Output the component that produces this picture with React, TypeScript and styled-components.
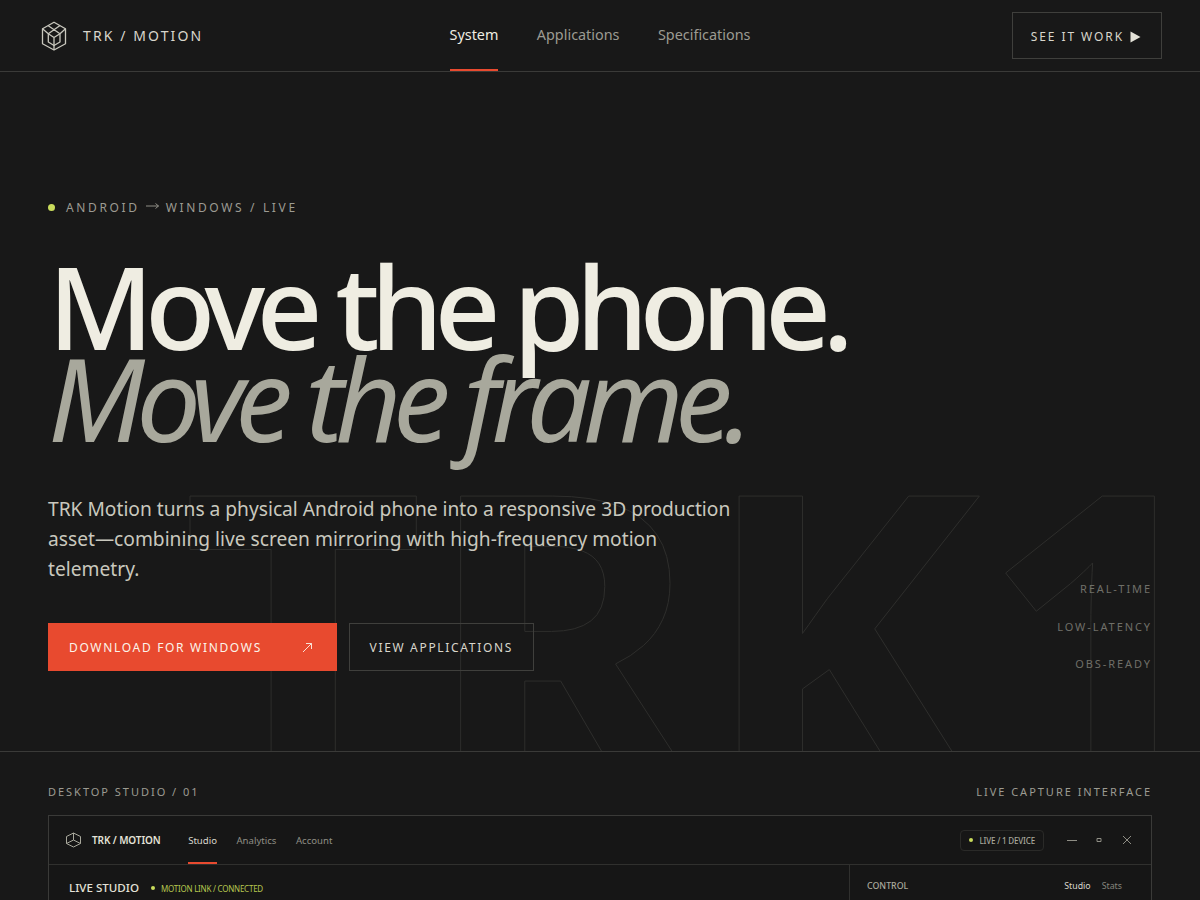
import styled, { createGlobalStyle } from "styled-components";

const GlobalStyle = createGlobalStyle`
  * { box-sizing: border-box; }
  html, body { margin: 0; height: 900px; overflow: hidden; background: #181818; }
  body { font-family: "Noto Sans", sans-serif; color: #efede2; }
`;

const Page = styled.div`
  width: 1200px;
  height: 900px;
  overflow: hidden;
  background: #181818;
`;

const Header = styled.header`
  height: 72px;
  padding: 0 38px;
  display: grid;
  grid-template-columns: 1fr auto 1fr;
  align-items: center;
  border-bottom: 1px solid #3a3a38;
`;

const Brand = styled.div`
  display: flex;
  align-items: center;
  gap: 16px;
  padding-left: 3px;
  font-size: 14px;
  letter-spacing: 0.15em;
  color: #d8d6cc;
`;

const Nav = styled.nav`
  display: flex;
  gap: 38.4px;
  height: 71px;
`;

const NavLink = styled.a<{ $active?: boolean }>`
  display: flex;
  align-items: center;
  height: 71px;
  font-size: 14.4px;
  color: ${({ $active }) => ($active ? "#efede2" : "#9c9b92")};
  border-bottom: 2px solid ${({ $active }) => ($active ? "#e84a2f" : "transparent")};
`;

const SeeButton = styled.a`
  justify-self: end;
  display: flex;
  align-items: center;
  gap: 6px;
  height: 47px;
  padding: 2px 20px 0 18px;
  border: 1px solid #3f3f3c;
  font-size: 12px;
  letter-spacing: 0.16em;
  color: #d8d6cc;
`;

const Hero = styled.section`
  position: relative;
  height: 680px;
  padding: 126px 48px 0;
  border-bottom: 1px solid #3a3a38;
  overflow: hidden;
`;

const Ghost = styled.div`
  position: absolute;
  left: 182px;
  top: 351px;
  font-size: 420px;
  line-height: 1;
  font-weight: 700;
  letter-spacing: 0.7px;
  white-space: nowrap;
  color: transparent;
  -webkit-text-stroke: 1px #2e2e2c;
`;

const Eyebrow = styled.div`
  position: relative;
  display: flex;
  align-items: center;
  gap: 11px;
  height: 18px;
  font-size: 12px;
  letter-spacing: 0.22em;
  color: #9c9b92;
`;

const Route = styled.span`
  display: flex;
  align-items: center;
  gap: 6.5px;
`;

const Dot = styled.span<{ $size?: number }>`
  width: ${({ $size }) => $size ?? 7}px;
  height: ${({ $size }) => $size ?? 7}px;
  border-radius: 50%;
  background: #c9dc5c;
  flex: none;
`;

const Title = styled.h1`
  position: relative;
  margin: 44px 0 0;
  font-size: 115.2px;
  line-height: 92.16px;
  font-weight: 500;
  letter-spacing: -0.075em;
  color: #efede2;
`;

const TitleLine = styled.span<{ $muted?: boolean }>`
  display: block;
  position: relative;
  z-index: ${({ $muted }) => ($muted ? 0 : 1)};
  font-style: ${({ $muted }) => ($muted ? "italic" : "normal")};
  font-weight: ${({ $muted }) => ($muted ? 400 : 500)};
  color: ${({ $muted }) => ($muted ? "#a8a89c" : "#efede2")};
`;

const Lead = styled.p`
  position: relative;
  width: 700px;
  margin: 50px 0 0;
  font-size: 19.2px;
  line-height: 29.6px;
  color: #c9c8be;
`;

const Actions = styled.div`
  position: relative;
  display: flex;
  gap: 12px;
  margin-top: 39.5px;
`;

const PrimaryButton = styled.a`
  width: 289px;
  height: 48px;
  padding: 1px 24px 0 21px;
  display: flex;
  align-items: center;
  justify-content: space-between;
  background: #e84a2f;
  font-size: 12px;
  letter-spacing: 0.14em;
  color: #fbf4ea;
`;

const SecondaryButton = styled.a`
  height: 48px;
  padding: 1px 19.5px 0;
  display: flex;
  align-items: center;
  border: 1px solid #3f3f3c;
  font-size: 12px;
  letter-spacing: 0.14em;
  color: #d8d6cc;
`;

const Tags = styled.ul`
  position: absolute;
  right: 48px;
  top: 509px;
  margin: 0;
  padding: 0;
  list-style: none;
  display: flex;
  flex-direction: column;
  gap: 21px;
  text-align: right;
  font-size: 11px;
  line-height: 16.5px;
  letter-spacing: 0.175em;
  color: #6f6f68;
`;

const Showcase = styled.section`
  padding: 31px 48px 0;
`;

const ShowcaseHead = styled.div`
  display: flex;
  justify-content: space-between;
  height: 16px;
  align-items: center;
  font-size: 11px;
  letter-spacing: 0.18em;
  color: #9c9b92;
`;

const AppWindow = styled.div`
  margin-top: 16px;
  height: 200px;
  border: 1px solid #3a3a38;
  background: #161616;
`;

const WindowBar = styled.div`
  height: 49px;
  padding: 0 16px;
  display: flex;
  align-items: center;
  border-bottom: 1px solid #30302e;
`;

const WindowBrand = styled.div`
  display: flex;
  align-items: center;
  gap: 10px;
  font-size: 10px;
  font-weight: 600;
  letter-spacing: -0.01em;
  color: #e4e2d8;
  margin-right: 27.5px;
`;

const WindowNav = styled.div`
  display: flex;
  gap: 19.5px;
  height: 48px;
`;

const WindowLink = styled.a<{ $active?: boolean }>`
  display: flex;
  align-items: center;
  height: 48px;
  padding-top: 2px;
  font-size: 9.6px;
  color: ${({ $active }) => ($active ? "#d8d6cc" : "#8f8e85")};
  border-bottom: 2px solid ${({ $active }) => ($active ? "#e84a2f" : "transparent")};
`;

const LivePill = styled.div`
  margin-left: auto;
  display: flex;
  align-items: center;
  gap: 6px;
  height: 21px;
  padding: 0 8px;
  border: 1px solid #2a2a28;
  border-radius: 4px;
  font-size: 8px;
  font-weight: 500;
  letter-spacing: -0.02em;
  color: #a8a89c;
`;

const WindowControls = styled.div`
  display: flex;
  align-items: center;
  gap: 17.25px;
  margin: 0 3.5px 0 23px;
  color: #8f8e85;
`;

const WindowBody = styled.div`
  display: grid;
  grid-template-columns: 800px 1fr;
  height: 150px;
`;

const StudioPane = styled.div`
  padding: 14px 20px;
  display: flex;
  align-items: flex-start;
  gap: 12px;
`;

const StudioTitle = styled.div`
  font-size: 11.6px;
  line-height: 18px;
  font-weight: 500;
  color: #e4e2d8;
`;

const StudioStatus = styled.div`
  display: flex;
  align-items: center;
  gap: 6px;
  height: 18px;
  font-size: 8px;
  letter-spacing: -0.03em;
  color: #b5c64f;
`;

const ControlPane = styled.div`
  padding: 13px 17px;
  display: flex;
  justify-content: space-between;
  border-left: 1px solid #30302e;
  font-size: 8.8px;
  line-height: 16px;
`;

const ControlTitle = styled.div`
  font-weight: 500;
  color: #a8a89c;
`;

const ControlTabs = styled.div`
  display: flex;
  gap: 11px;
  margin-right: 12px;
`;

const ControlTab = styled.span<{ $active?: boolean }>`
  color: ${({ $active }) => ($active ? "#d8d6cc" : "#85847c")};
`;

function CubeLogo() {
  return (
    <svg width="26" height="30" viewBox="0 0 26 30" fill="none" stroke="#c9c8be" strokeWidth="1.3" strokeLinejoin="round">
      <path d="M13 1.2 L24.5 7.8 V22.8 L13 29 L1.5 22.8 V7.8 Z" />
      <path d="M7.3 4.7 L19 12.8 M18.7 4.7 L7.3 12.8 M1.5 7.8 L7.3 12.8 V21 L13 24.5 L19 21 V12.8 L24.5 7.8" />
      <path d="M7.3 12.8 L13 16.5 L19 12.8 M13 16.5 V29" />
    </svg>
  );
}

function SmallCube() {
  return (
    <svg width="17" height="16" viewBox="0 0 17 16" fill="none" stroke="#a8a89c" strokeWidth="1">
      <path d="M8.5 1 L15.5 4.5 V11.5 L8.5 15 L1.5 11.5 V4.5 Z" />
      <path d="M1.5 11.5 L8.5 8 L15.5 11.5 M8.5 8 V1" />
    </svg>
  );
}

function RouteArrow() {
  return (
    <svg width="13" height="14" viewBox="0 0 13 14" fill="none" stroke="#9c9b92" strokeWidth="0.9">
      <path d="M0 6 H12.5 M9.5 3.5 L12.5 6 L9.5 8.5" />
    </svg>
  );
}

function ArrowUpRight() {
  return (
    <svg width="11" height="11" viewBox="0 0 11 11" fill="none" stroke="#fbf4ea" strokeWidth="0.9">
      <path d="M1 10 L9.5 1.5 M4 1.5 H9.5 V7" />
    </svg>
  );
}

function PlayIcon() {
  return (
    <svg width="11" height="12" viewBox="0 0 11 12" fill="#e4e2d8">
      <path d="M0.5 0.5 L10.5 6 L0.5 11.5 Z" />
    </svg>
  );
}

export default function App() {
  return (
    <Page>
      <GlobalStyle />
      <Header>
        <Brand>
          <CubeLogo />
          TRK / MOTION
        </Brand>
        <Nav>
          <NavLink $active>System</NavLink>
          <NavLink>Applications</NavLink>
          <NavLink>Specifications</NavLink>
        </Nav>
        <SeeButton>
          SEE IT WORK
          <PlayIcon />
        </SeeButton>
      </Header>
      <Hero>
        <Ghost>TRK1</Ghost>
        <Eyebrow>
          <Dot />
          <Route>
            <span>ANDROID</span>
            <RouteArrow />
            <span>WINDOWS / LIVE</span>
          </Route>
        </Eyebrow>
        <Title>
          <TitleLine>Move the phone.</TitleLine>
          <TitleLine $muted>Move the frame.</TitleLine>
        </Title>
        <Lead>
          TRK Motion turns a physical Android phone into a responsive 3D production asset—combining live screen
          mirroring with high-frequency motion telemetry.
        </Lead>
        <Actions>
          <PrimaryButton>
            DOWNLOAD FOR WINDOWS
            <ArrowUpRight />
          </PrimaryButton>
          <SecondaryButton>VIEW APPLICATIONS</SecondaryButton>
        </Actions>
        <Tags>
          <li>REAL-TIME</li>
          <li>LOW-LATENCY</li>
          <li>OBS-READY</li>
        </Tags>
      </Hero>
      <Showcase>
        <ShowcaseHead>
          <span>DESKTOP STUDIO / 01</span>
          <span>LIVE CAPTURE INTERFACE</span>
        </ShowcaseHead>
        <AppWindow>
          <WindowBar>
            <WindowBrand>
              <SmallCube />
              TRK / MOTION
            </WindowBrand>
            <WindowNav>
              <WindowLink $active>Studio</WindowLink>
              <WindowLink>Analytics</WindowLink>
              <WindowLink>Account</WindowLink>
            </WindowNav>
            <LivePill>
              <Dot $size={4} />
              LIVE / 1 DEVICE
            </LivePill>
            <WindowControls>
              <svg width="10" height="10" viewBox="0 0 10 10" stroke="currentColor" fill="none"><path d="M0 5.5 H10" /></svg>
              <svg width="10" height="10" viewBox="0 0 10 10" stroke="currentColor" fill="none"><path d="M3 3.5 H7 V6.5 H3 Z" /></svg>
              <svg width="10" height="10" viewBox="0 0 10 10" stroke="currentColor" fill="none"><path d="M1 1 L9 9 M9 1 L1 9" /></svg>
            </WindowControls>
          </WindowBar>
          <WindowBody>
            <StudioPane>
              <StudioTitle>LIVE STUDIO</StudioTitle>
              <StudioStatus>
                <Dot $size={4} />
                MOTION LINK / CONNECTED
              </StudioStatus>
            </StudioPane>
            <ControlPane>
              <ControlTitle>CONTROL</ControlTitle>
              <ControlTabs>
                <ControlTab $active>Studio</ControlTab>
                <ControlTab>Stats</ControlTab>
              </ControlTabs>
            </ControlPane>
          </WindowBody>
        </AppWindow>
      </Showcase>
    </Page>
  );
}
